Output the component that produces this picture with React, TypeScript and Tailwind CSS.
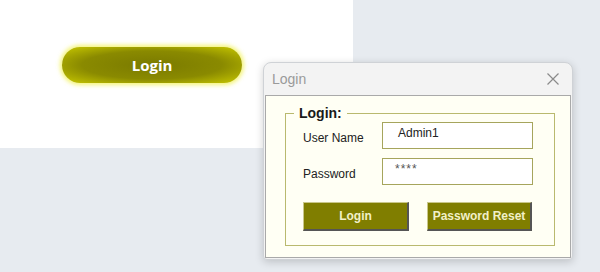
import React from 'react';

const LoginDialog: React.FC = () => (
  <div className="absolute left-[263px] top-[62px] w-[310px] h-[198px] rounded-t-[8px] rounded-b-[4px] border border-[#cfd2d6] bg-[#f3f3f3] shadow-[0_2px_8px_rgba(0,0,0,0.18)] flex flex-col overflow-hidden">
    <div className="h-[32px] flex items-center justify-between pl-[8px] pr-[12px] shrink-0">
      <span className="text-[14px] text-[#9a9a9a]">Login</span>
      <svg width="14" height="14" viewBox="0 0 14 14" className="text-[#8a8a8a]">
        <path d="M1.5 1.5 L12.5 12.5 M12.5 1.5 L1.5 12.5" stroke="currentColor" strokeWidth="1.2" fill="none" />
      </svg>
    </div>
    <div className="flex-1 mx-[1px] mb-[1px] border border-[#a9a9a9] bg-[#fffff4] pt-[9px] px-[19px]">
      <fieldset className="h-[141px] border border-[#b9b96e] pl-[17px] pr-[21px] pt-0">
        <legend className="px-[5px] ml-[-9px] text-[14px] font-bold text-[#1a1a1a] leading-[16px]">Login:</legend>
        <div className="flex items-center mt-[1px]">
          <span className="w-[79px] pt-[4px] text-[12px] text-[#222]">User Name</span>
          <div className="w-[151px] h-[27px] border border-[#a6a55c] bg-white pl-[15px] pt-[1px] text-[12px] text-[#222]">Admin1</div>
        </div>
        <div className="flex items-center mt-[9px]">
          <span className="w-[79px] pt-[4px] text-[12px] text-[#222]">Password</span>
          <div className="w-[151px] h-[27px] border border-[#a6a55c] bg-white pl-[12px] pt-[1px] text-[12px] text-[#555] tracking-[1px]">****</div>
        </div>
        <div className="flex justify-between mt-[17px] pr-[1px]">
          <button className="w-[106px] h-[29px] bg-[#807e00] border-t border-l border-[#c9c78a] border-r-2 border-b-2 border-r-[#555] border-b-[#555] text-[12px] font-bold text-[#f2f0c8]">Login</button>
          <button className="w-[105px] h-[29px] bg-[#807e00] border-t border-l border-[#c9c78a] border-r-2 border-b-2 border-r-[#555] border-b-[#555] text-[12px] font-bold text-[#f2f0c8]">Password Reset</button>
        </div>
      </fieldset>
    </div>
  </div>
);

export default function App() {
  return (
    <div className="relative w-[600px] h-[272px] bg-[#e7ebf0] overflow-hidden font-['Liberation_Sans',Arial,sans-serif]">
      <div className="w-[353px] h-[148px] bg-white pt-[47px] pl-[62px]">
        <button className="w-[180px] h-[36px] rounded-full bg-[radial-gradient(ellipse_at_center,#7a7a00_0%,#8a8a00_55%,#c9c900_100%)] shadow-[0_0_4px_2px_rgba(240,240,60,0.7)] text-white font-bold text-[15px] font-['Open_Sans',sans-serif]">
          Login
        </button>
      </div>
      <LoginDialog />
    </div>
  );
}
